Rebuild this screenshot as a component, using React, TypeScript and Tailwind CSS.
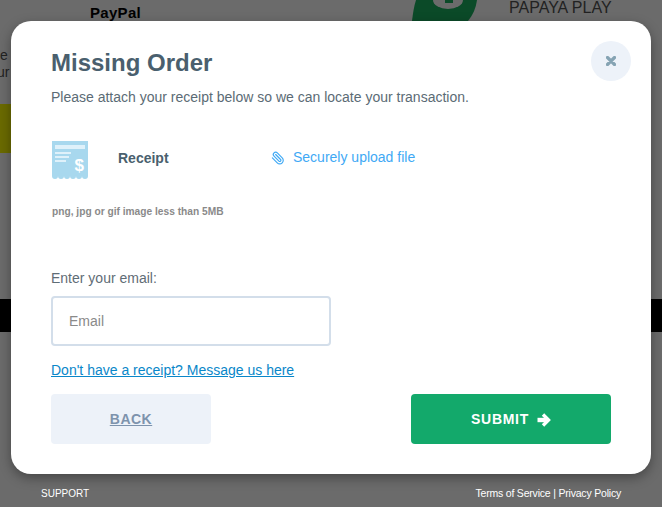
import { Paperclip } from 'lucide-react';

function ReceiptIcon() {
  return (
    <svg width="36" height="38" viewBox="0 0 36 38" className="ml-[1px] block">
      <path
        d="M0 0H36V35a3 3 0 0 1-6 0a3 3 0 0 1-6 0a3 3 0 0 1-6 0a3 3 0 0 1-6 0a3 3 0 0 1-6 0a3 3 0 0 1-6 0Z"
        fill="#a8d8ee"
      />
      <rect x="3" y="4" width="30" height="4" fill="#dff1fa" />
      <rect x="3" y="11" width="16" height="2" fill="#dff1fa" />
      <rect x="3" y="15" width="14" height="2" fill="#dff1fa" />
      <rect x="3" y="19" width="11" height="2" fill="#dff1fa" />
      <text x="22.5" y="30" fontSize="17" fontWeight="700" fill="#ffffff" fontFamily="Liberation Sans, sans-serif">
        $
      </text>
    </svg>
  );
}

function GreenBadge() {
  return (
    <svg width="66" height="21" viewBox="0 0 66 21" className="block">
      <path d="M4 0H65C64 8 61 15 56 21H0C1 13 2 6 4 0Z" fill="#0b4a28" />
      <path d="M21 0A15 9 0 0 0 51 0Z" fill="#6b6b6b" />
      <rect x="33" y="0" width="8" height="3" fill="#0b4a28" />
    </svg>
  );
}

function CloseIcon() {
  return (
    <svg width="10" height="10" viewBox="0 0 10 10" className="block">
      <path d="M1.5 1.5L8.5 8.5M8.5 1.5L1.5 8.5" stroke="#85a3b3" strokeWidth="3.2" strokeLinecap="round" fill="none" />
    </svg>
  );
}

function ArrowIcon() {
  return (
    <svg width="14" height="14" viewBox="0 0 14 14" className="block">
      <path d="M0.5 7H10" stroke="#ffffff" strokeWidth="4.4" fill="none" />
      <path d="M6 1.5L11.5 7L6 12.5" stroke="#ffffff" strokeWidth="3.4" fill="none" />
    </svg>
  );
}

export default function App() {
  return (
    <div className="relative h-[507px] w-[662px] overflow-hidden bg-[#6b6b6b] font-['Liberation_Sans',Arial,sans-serif]">
      {/* page behind the overlay */}
      <div className="flex h-[104px] flex-col">
        <div className="flex h-[21px] items-start pl-[90px]">
          <span className="mt-[4px] w-[322px] text-[15px] font-bold leading-[18px] tracking-[0.3px] text-black">
            PayPal
          </span>
          <GreenBadge />
          <span className="ml-[31px] text-[16px] leading-[16px] text-[#222]">PAPAYA PLAY</span>
        </div>
        <div className="mt-[26px] text-[14px] leading-[17px] text-[#222]">
          <p>e</p>
          <p className="-ml-[3px]">ur</p>
        </div>
      </div>
      <div className="h-[49px] w-[200px] bg-[#6a6a00]" />
      <div className="h-[146px]" />
      <div className="h-[33px] bg-black" />
      <div className="flex items-center justify-between px-[41px] pt-[154px] leading-[12px] text-white">
        <span className="mt-[2px] text-[10px]">SUPPORT</span>
        <span className="text-[10.5px] tracking-[-0.2px]">Terms of Service | Privacy Policy</span>
      </div>

      {/* modal */}
      <div className="absolute left-[11px] top-[21px] h-[453px] w-[640px] rounded-[20px] bg-white px-[40px] pt-[27px] shadow-[0_4px_12px_rgba(0,0,0,0.35)]">
        <button
          type="button"
          aria-label="Close"
          className="absolute right-[20px] top-[20px] grid h-[40px] w-[40px] place-items-center rounded-full bg-[#edf2f9]"
        >
          <CloseIcon />
        </button>
        <h2 className="text-[24px] font-bold leading-[30px] text-[#4a5f6e]">Missing Order</h2>
        <p className="mt-[10px] text-[14px] leading-[18px] text-[#5b6b75]">
          Please attach your receipt below so we can locate your transaction.
        </p>

        <div className="mt-[35px] flex h-[38px] items-center">
          <ReceiptIcon />
          <span className="ml-[30px] -mt-[3px] w-[153px] text-[14px] font-bold text-[#4a5f6e]">Receipt</span>
          <Paperclip size={14} strokeWidth={2} className="-mt-[5px] -scale-x-100 text-[#3fa9f5]" />
          <span className="ml-[8px] -mt-[5px] text-[14px] text-[#3fa9f5]">Securely upload file</span>
        </div>
        <p className="ml-[1px] mt-[26px] text-[10.2px] font-bold leading-[14px] text-[#8a8a8a]">
          png, jpg or gif image less than 5MB
        </p>

        <p className="mt-[50px] text-[14px] leading-[18px] text-[#5f6d76]">Enter your email:</p>
        <input
          placeholder="Email"
          className="mt-[9px] block h-[50px] w-[280px] rounded-[4px] border-2 border-[#d3deea] px-[16px] text-[14px] text-[#333] outline-none placeholder:text-[#8a8a8a]"
        />
        <a href="#" className="mt-[15px] inline-block text-[14px] leading-[18px] text-[#0a87c9] underline">
          Don't have a receipt? Message us here
        </a>

        <div className="mt-[12px] flex justify-between">
          <button
            type="button"
            className="h-[50px] w-[160px] rounded-[4px] bg-[#edf2f9] text-[14px] font-bold tracking-[0.5px] text-[#7d93ad] underline"
          >
            BACK
          </button>
          <button
            type="button"
            className="flex h-[50px] w-[200px] items-center justify-center gap-[8px] rounded-[4px] bg-[#13a96b] pt-[1px] text-[14px] font-bold tracking-[0.7px] text-white"
          >
            SUBMIT
            <ArrowIcon />
          </button>
        </div>
      </div>
    </div>
  );
}
